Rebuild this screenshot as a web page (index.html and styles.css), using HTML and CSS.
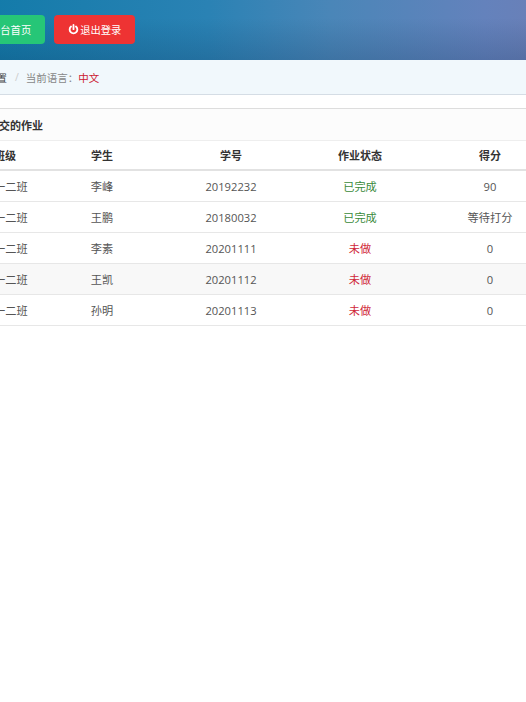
FILE: index.html
```html
<!DOCTYPE html>
<html lang="zh">
<head>
<meta charset="utf-8">
<title>提交的作业</title>
<link rel="stylesheet" href="styles.css">
</head>
<body>
<div class="page">
  <header class="top">
    <a class="btn green">平台首页</a>
    <a class="btn red">
      <svg class="power" viewBox="0 0 12 12" aria-hidden="true"><path d="M3.3 2.8a4.2 4.2 0 1 0 5.4 0" fill="none" stroke="#fff" stroke-width="2" stroke-linecap="round"/><path d="M6 1v4.6" fill="none" stroke="#fff" stroke-width="2" stroke-linecap="round"/></svg>
      退出登录
    </a>
  </header>
  <nav class="crumb">
    <span class="crumb-first">语言设置</span>
    <span class="sep">/</span>
    <span class="lang">当前语言：<em class="cur">中文</em></span>
  </nav>
  <section class="panel">
    <h2 class="panel-title">提交的作业</h2>
    <table class="grid">
      <colgroup>
        <col class="c1"><col class="c2"><col class="c3"><col class="c4"><col class="c5">
      </colgroup>
      <thead>
        <tr><th>班级</th><th>学生</th><th>学号</th><th>作业状态</th><th>得分</th></tr>
      </thead>
      <tbody>
        <tr><td>一二班</td><td>李峰</td><td>20192232</td><td class="done">已完成</td><td>90</td></tr>
        <tr><td>一二班</td><td>王鹏</td><td>20180032</td><td class="done">已完成</td><td>等待打分</td></tr>
        <tr><td>一二班</td><td>李素</td><td>20201111</td><td class="todo">未做</td><td>0</td></tr>
        <tr class="hover"><td>一二班</td><td>王凯</td><td>20201112</td><td class="todo">未做</td><td>0</td></tr>
        <tr><td>一二班</td><td>孙明</td><td>20201113</td><td class="todo">未做</td><td>0</td></tr>
      </tbody>
    </table>
  </section>
</div>
</body>
</html>
```
FILE: styles.css
```css
html, body {
  margin: 0;
  padding: 0;
  height: 100%;
  overflow: hidden;
  background: #fff;
}
body {
  font-family: "Open Sans", "Noto Sans CJK SC", sans-serif;
  font-size: 11.2px;
  color: #555;
}
.page {
  width: 618px;
  margin-left: -40px;
}
.top {
  height: 60px;
  box-sizing: border-box;
  padding: 15px 0 0 16px;
  display: flex;
  gap: 9px;
  align-items: flex-start;
  background:
    linear-gradient(180deg, rgba(10, 40, 80, 0) 30%, rgba(10, 40, 80, 0.2) 100%),
    linear-gradient(90deg, #107aa8 0%, #2a82b4 40%, #4a86b8 60%, #6482bc 85%, #6e7eb4 100%);
}
.btn {
  height: 29px;
  display: flex;
  align-items: center;
  gap: 1px;
  padding: 0 14px;
  border-radius: 4px;
  color: #fff;
  font-size: 10.3px;
}
.green { background: #26c677; }
.red { background: #ee3333; }
.power { width: 11px; height: 11px; }
.crumb {
  height: 34px;
  box-sizing: content-box;
  padding-left: 5px;
  display: flex;
  align-items: center;
  font-size: 10.5px;
  background: #f1f8fc;
  border-bottom: 1px solid #d5dde5;
}
.crumb-first { color: #444; }
.sep { margin: 0 7px 0 8px; color: #ccc; }
.lang { color: #888; }
.cur { font-style: normal; color: #cc2030; }
.panel {
  margin-top: 13px;
  border-top: 1px solid #ddd;
}
.panel-title {
  margin: 0;
  height: 31px;
  line-height: 34px;
  padding-left: 28px;
  font-size: 11px;
  font-weight: 700;
  color: #333;
  background: #fcfcfc;
  border-bottom: 1px solid #eee;
}
.grid {
  width: 618px;
  table-layout: fixed;
  border-collapse: collapse;
}
.c1 { width: 100px; }
.c2 { width: 84px; }
.c3 { width: 174px; }
.c4 { width: 84px; }
.c5 { width: 176px; }
.grid th, .grid td {
  padding: 0;
  text-align: center;
}
.grid th {
  height: 28px;
  font-weight: 700;
  font-size: 11px;
  color: #333;
  border-bottom: 2px solid #e2e2e2;
}
.grid td {
  height: 30px;
  border-bottom: 1px solid #e7e7e7;
}
.grid th:first-child, .grid td:first-child {
  text-align: left;
  padding-left: 34px;
}
.hover td { background: #f8f8f8; }
.grid td.done { color: #3a8a3a; }
.grid td.todo { color: #d02a3a; }
```
